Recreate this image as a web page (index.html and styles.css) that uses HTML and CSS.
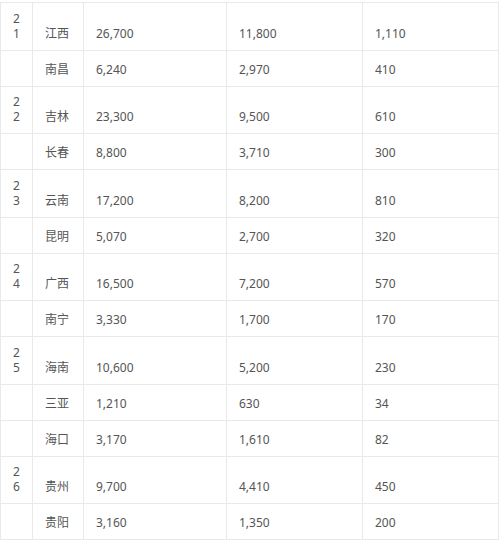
FILE: index.html
```html
<!DOCTYPE html>
<html lang="zh-CN">
<head>
<meta charset="utf-8">
<title>城市数据表</title>
<link rel="stylesheet" href="styles.css">
</head>
<body>
<table class="data">
  <colgroup>
    <col class="c-rank">
    <col class="c-name">
    <col class="c-a">
    <col class="c-b">
    <col class="c-c">
  </colgroup>
  <tbody>
    <tr class="tall"><td class="rank">21</td><td>江西</td><td>26,700</td><td>11,800</td><td>1,110</td></tr>
    <tr class="short"><td class="rank"></td><td>南昌</td><td>6,240</td><td>2,970</td><td>410</td></tr>
    <tr class="tall"><td class="rank">22</td><td>吉林</td><td>23,300</td><td>9,500</td><td>610</td></tr>
    <tr class="short"><td class="rank"></td><td>长春</td><td>8,800</td><td>3,710</td><td>300</td></tr>
    <tr class="tall"><td class="rank">23</td><td>云南</td><td>17,200</td><td>8,200</td><td>810</td></tr>
    <tr class="short"><td class="rank"></td><td>昆明</td><td>5,070</td><td>2,700</td><td>320</td></tr>
    <tr class="tall"><td class="rank">24</td><td>广西</td><td>16,500</td><td>7,200</td><td>570</td></tr>
    <tr class="short"><td class="rank"></td><td>南宁</td><td>3,330</td><td>1,700</td><td>170</td></tr>
    <tr class="tall"><td class="rank">25</td><td>海南</td><td>10,600</td><td>5,200</td><td>230</td></tr>
    <tr class="short"><td class="rank"></td><td>三亚</td><td>1,210</td><td>630</td><td>34</td></tr>
    <tr class="short"><td class="rank"></td><td>海口</td><td>3,170</td><td>1,610</td><td>82</td></tr>
    <tr class="tall"><td class="rank">26</td><td>贵州</td><td>9,700</td><td>4,410</td><td>450</td></tr>
    <tr class="short"><td class="rank"></td><td>贵阳</td><td>3,160</td><td>1,350</td><td>200</td></tr>
  </tbody>
</table>
</body>
</html>
```
FILE: styles.css
```css
html, body {
  margin: 0;
  padding: 0;
  background: #ffffff;
}
body {
  padding-top: 2px;
  font-family: "Noto Sans", "Noto Sans CJK SC", sans-serif;
  font-size: 12px;
  color: #555555;
}
.data {
  border-collapse: collapse;
  table-layout: fixed;
  width: 498px;
}
.c-rank { width: 32px; }
.c-name { width: 51px; }
.c-a { width: 143px; }
.c-b { width: 136px; }
.c-c { width: 136px; }
.data td {
  border: 1px solid #e9e9e9;
  padding: 7.6px 12px 9px 12px;
  line-height: 15px;
  vertical-align: bottom;
  text-align: left;
}
.data td.rank {
  word-break: break-all;
}
.data tr.short td {
  height: 18.4px;
}
```
